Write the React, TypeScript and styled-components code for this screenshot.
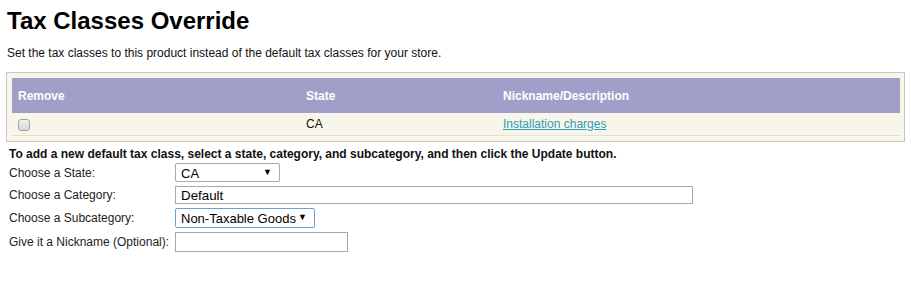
import React from "react"
import styled, { createGlobalStyle } from "styled-components"

const GlobalStyle = createGlobalStyle`
  body {
    margin: 0;
    background: #fff;
    font-family: "Liberation Sans", Arial, sans-serif;
    color: #111;
  }
`

type TaxClass = {
  state: string
  nickname: string
}

const taxClasses: TaxClass[] = [{ state: "CA", nickname: "Installation charges" }]

const App: React.FC = () => (
  <Page>
    <GlobalStyle />
    <Title>Tax Classes Override</Title>
    <Intro>Set the tax classes to this product instead of the default tax classes for your store.</Intro>
    <Panel>
      <Table>
        <colgroup>
          <col width={288} />
          <col width={197} />
          <col />
        </colgroup>
        <thead>
          <tr>
            <HeadCell>Remove</HeadCell>
            <HeadCell>State</HeadCell>
            <HeadCell>Nickname/Description</HeadCell>
          </tr>
        </thead>
        <tbody>
          {taxClasses.map(tc => (
            <Row key={tc.state + tc.nickname}>
              <Cell>
                <Check type="checkbox" />
              </Cell>
              <Cell>{tc.state}</Cell>
              <Cell>
                <NickLink href="#">{tc.nickname}</NickLink>
              </Cell>
            </Row>
          ))}
        </tbody>
      </Table>
    </Panel>
    <Form>
      <Instructions>
        To add a new default tax class, select a state, category, and subcategory, and then click the Update button.
      </Instructions>
      <Field>
        <Label>Choose a State:</Label>
        <SelectBox width={105}>
          <Select defaultValue="CA">
            <option>CA</option>
          </Select>
          <Arrow>▼</Arrow>
        </SelectBox>
      </Field>
      <Field>
        <Label>Choose a Category:</Label>
        <TextInput width={518} defaultValue="Default" />
      </Field>
      <Field>
        <Label>Choose a Subcategory:</Label>
        <SelectBox width={140} focused>
          <Select defaultValue="Non-Taxable Goods">
            <option>Non-Taxable Goods</option>
          </Select>
          <Arrow>▼</Arrow>
        </SelectBox>
      </Field>
      <Field>
        <Label>Give it a Nickname (Optional):</Label>
        <TextInput width={173} tall />
      </Field>
    </Form>
  </Page>
)

const Page = styled.div`
  padding: 0 6px;
`

const Title = styled.h1`
  margin: 0;
  padding: 7px 0 0 1px;
  font-size: 24px;
  line-height: 28px;
  font-weight: bold;
  color: #000;
`

const Intro = styled.p`
  margin: 0;
  padding: 10px 0 0 1px;
  font-size: 12px;
  line-height: 16px;
`

const Panel = styled.div`
  margin-top: 11px;
  border: 1px solid #cbc7b8;
  background: #f8f6eb;
  padding: 5px 4px 5px 5px;
`

const Table = styled.table`
  width: 100%;
  table-layout: fixed;
  border-collapse: collapse;
`

const HeadCell = styled.th`
  height: 35px;
  padding: 0 0 0 6px;
  background: #9f9fc9;
  color: #fff;
  font-size: 12px;
  font-weight: bold;
  text-align: left;
`

const Row = styled.tr`
  border-bottom: 1px solid #e3e0d3;
`

const Cell = styled.td`
  height: 22px;
  padding: 0 0 0 6px;
  font-size: 12px;
  color: #111;
`

const Check = styled.input`
  margin: 0;
  width: 12px;
  height: 12px;
  vertical-align: middle;
  appearance: none;
  border: 1px solid #a3a3a3;
  border-radius: 3px;
  background: linear-gradient(#f0f0f0, #d6d6d6);
`

const NickLink = styled.a`
  color: #2e9db3;
  text-decoration: underline;
`

const Form = styled.div`
  padding: 4px 3px 0;
`

const Instructions = styled.div`
  font-size: 12px;
  font-weight: bold;
  line-height: 16px;
  margin-bottom: 1px;
`

const Field = styled.div`
  display: grid;
  grid-template-columns: 166px auto;
  align-items: center;
  margin-bottom: 4px;
`

const Label = styled.span`
  font-size: 12px;
  color: #222;
`

const SelectBox = styled.div<{ width: number; focused?: boolean }>`
  position: relative;
  width: ${p => p.width}px;
  height: ${p => (p.focused ? 20 : 19)}px;
  box-sizing: border-box;
  border: 1px solid ${p => (p.focused ? "#6d9fd6" : "#a9a9a9")};
  border-radius: 2px;
  background: #fff;
`

const Select = styled.select`
  appearance: none;
  border: none;
  outline: none;
  background: transparent;
  width: 100%;
  height: 100%;
  padding: 0 0 0 5px;
  font-family: "Liberation Sans", Arial, sans-serif;
  font-size: 13px;
  color: #000;
`

const Arrow = styled.span`
  position: absolute;
  right: 7px;
  top: 3px;
  font-size: 9px;
  color: #000;
  pointer-events: none;
`

const TextInput = styled.input<{ width: number; tall?: boolean }>`
  width: ${p => p.width}px;
  height: ${p => (p.tall ? 20 : 18)}px;
  box-sizing: border-box;
  border: 1px solid #a9a9a9;
  padding: 0 0 0 5px;
  font-family: "Liberation Sans", Arial, sans-serif;
  font-size: 13.33px;
  color: #000;
  outline: none;
`

export default App
